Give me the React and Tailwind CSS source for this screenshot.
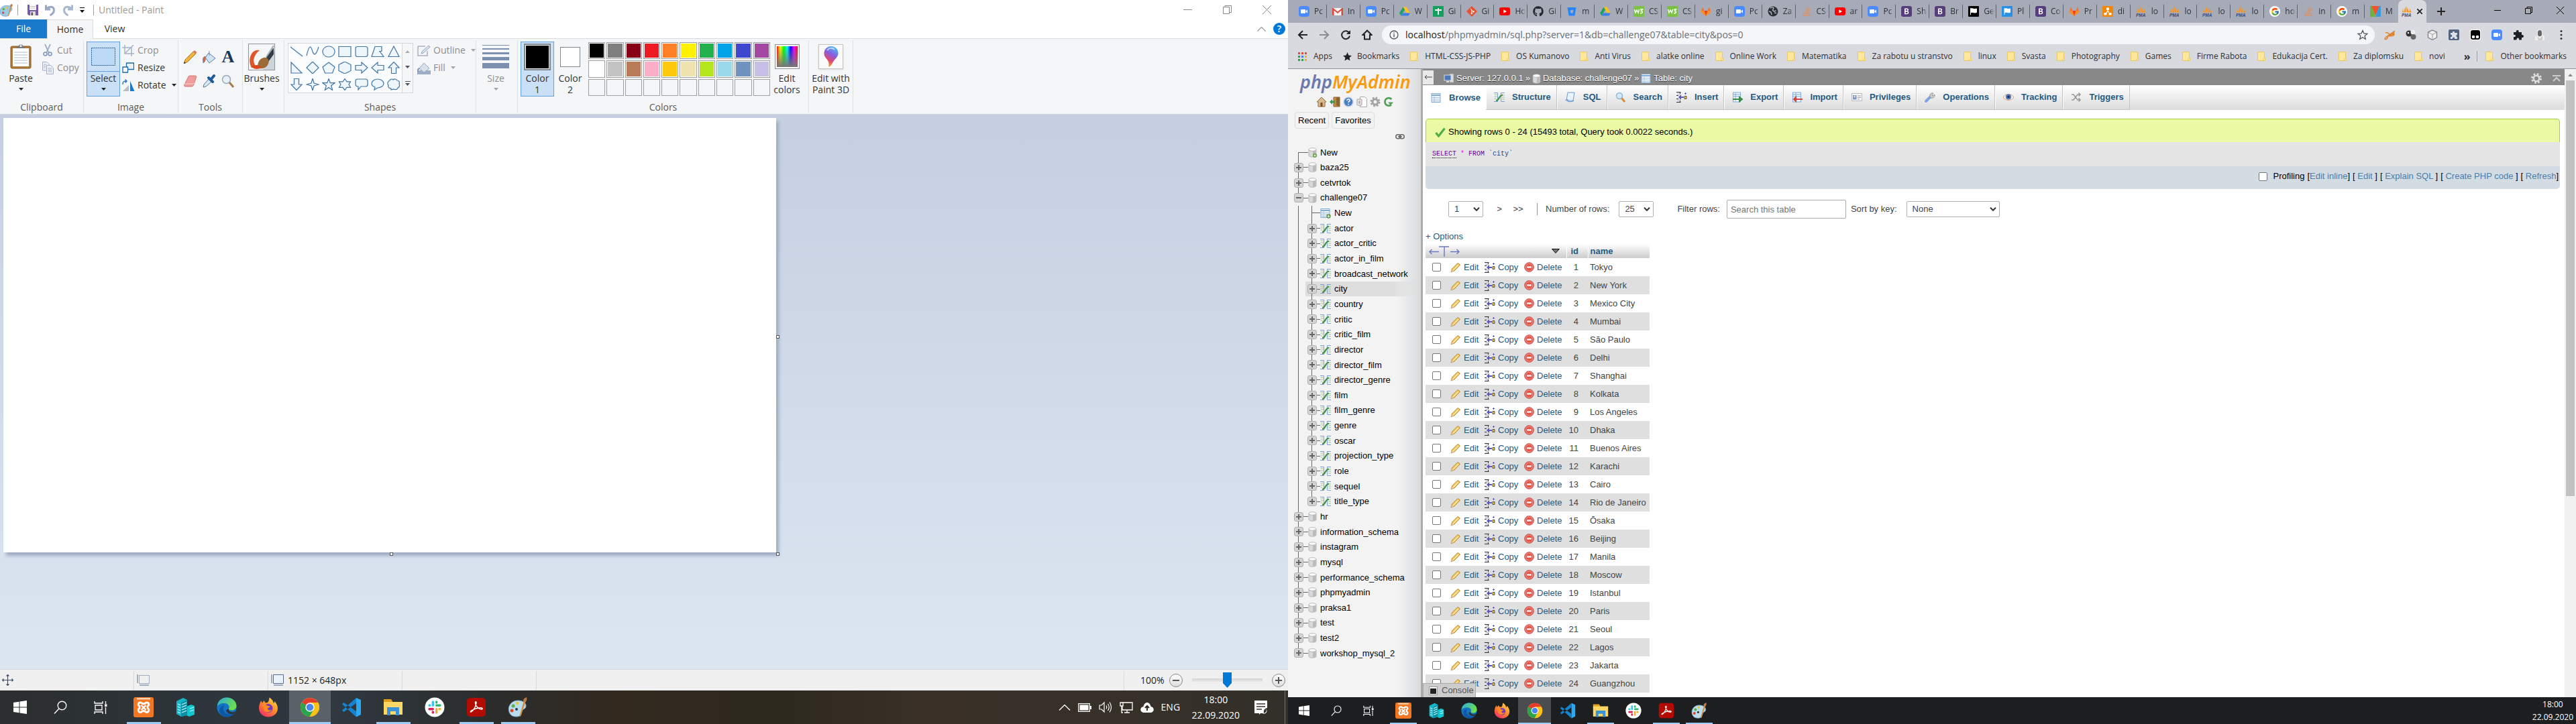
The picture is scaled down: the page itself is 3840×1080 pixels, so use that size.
import React from "react";
import { FcGoogle } from "react-icons/fc";
import { FaGithub, FaStackOverflow } from "react-icons/fa";

const UI = "font-['Open_Sans','Noto_Sans',sans-serif]";
const ARIAL = "font-['Liberation_Sans',Arial,sans-serif]";

function Svg({ s = 16, w, h, vb = "0 0 16 16", className = "", children }) {
  return (
    <svg width={w || s} height={h || s} viewBox={vb} className={"shrink-0 " + className} fill="none" aria-hidden="true">
      {children}
    </svg>
  );
}

/* ---------- shared application icons ---------- */

function ZoomIcon({ s = 16 }) {
  return (
    <Svg s={s}>
      <rect width="16" height="16" rx="4" fill="#4a8cff" />
      <rect x="3" y="5" width="7" height="6" rx="1.2" fill="#fff" />
      <path d="M10.6 7.2 13 5.4v5.2l-2.4-1.8z" fill="#fff" />
    </Svg>
  );
}
function PmaIcon() {
  return (
    <Svg>
      <path d="M6.500 0 3 9.500h3.500zM7.500 1v8.500h4zM2.500 4 .5 9.500h2.200zM12 4l-.3 5.500H15z" fill="#f79420" />
      <text x="0" y="15.500" fontSize="6.500" fontWeight="700" fontStyle="italic" fill="#3d4a7d" fontFamily="Liberation Sans">PMA</text>
    </Svg>
  );
}
function BootstrapIcon() {
  return (
    <Svg>
      <rect width="16" height="16" rx="3" fill="#563d7c" />
      <path fillRule="evenodd" d="M5 3.500h3.600c1.500 0 2.400.8 2.400 2 0 .9-.5 1.600-1.300 1.900 1.100.2 1.700 1 1.700 2.200 0 1.600-1.100 2.600-2.900 2.600H5zm1.700 3.500h1.500c.8 0 1.200-.3 1.200-1s-.4-1-1.200-1H6.700zm0 3.900h1.700c.9 0 1.300-.4 1.300-1.200s-.5-1.200-1.400-1.200H6.700z" fill="#fff" />
    </Svg>
  );
}
const FAV = {
  zoom: <ZoomIcon />,
  gmail: (
    <Svg>
      <path d="M0 3h16v11H0z" fill="#f3f3f3" />
      <path d="M0 14V3h1.500L8 8.500 14.500 3H16v11h-2.500V6.500L8 11 2.500 6.500V14z" fill="#d94a3d" />
    </Svg>
  ),
  drive: (
    <Svg>
      <path d="M5.500 1.500h5L16 10.500h-5z" fill="#fbc11d" />
      <path d="M5.500 1.500 0 10.500l2.500 4L8 5.500z" fill="#1da261" />
      <path d="M5 10.500h11l-2.500 4h-11z" fill="#3f7ee8" />
    </Svg>
  ),
  sheets: (
    <Svg>
      <rect width="16" height="16" rx="1" fill="#12a05c" />
      <path d="M3 5h10v2H9v6H7V7H3zM7 3h2v3H7z" fill="#fff" />
    </Svg>
  ),
  git: (
    <Svg>
      <path d="M8 0l8 8-8 8-8-8z" fill="#e8502f" />
      <path d="M6 4l4 4M7.800 5.800V11" stroke="#fff" strokeWidth="1" />
      <circle cx="7.800" cy="11" r="1.200" fill="#fff" />
      <circle cx="10.500" cy="8.200" r="1.200" fill="#fff" />
    </Svg>
  ),
  yt: (
    <Svg>
      <rect y="2" width="16" height="12" rx="3" fill="#f00" />
      <path d="M6.300 5.300v5.400L11 8z" fill="#fff" />
    </Svg>
  ),
  github: <FaGithub size={16} color="#24292e" />,
  bitbucket: (
    <Svg>
      <path d="M1.500 2h13l-2 12.500h-9z" fill="#2684ff" />
      <path d="M5.800 6h4.600l-.7 4.500H6.500z" fill="#a7abb8" />
    </Svg>
  ),
  w3: (
    <Svg>
      <rect width="16" height="16" fill="#7bc143" />
      <path d="M1.500 5l1.500 5 2-4 2 4 1.500-5M10 5h3.500l-2 2.500c3 0 2.500 4-1.500 3" stroke="#fff" strokeWidth="1.400" />
    </Svg>
  ),
  gitlab: (
    <Svg>
      <path d="M8 15 .5 9 3 1.500 5.500 7h5L13 1.500 15.500 9z" fill="#fc6d26" />
      <path d="M8 15 5.500 7h5z" fill="#e24329" />
      <path d="M8 15 .5 9l.8-2h4.200zM8 15l7.500-6-.8-2h-4.200z" fill="#fca326" opacity=".6" />
    </Svg>
  ),
  globe: (
    <Svg>
      <circle cx="8" cy="8" r="7.500" fill="#2b2f36" />
      <path d="M4 3c2-1 4-1 5 0L7.500 6l2 2 3-1M2 8l3 1 1 4M10 10l3 .5" stroke="#b5b8c1" strokeWidth="1.400" />
    </Svg>
  ),
  so: <FaStackOverflow size={16} color="#dc905f" />,
  boot: <BootstrapIcon />,
  flagk: (
    <Svg>
      <rect width="16" height="16" rx="1" fill="#000" />
      <path d="M3.500 3v10M4 4c3-1 4 1.500 8.500 0v5.500C9 11 7 8.500 4 9.500z" stroke="#fff" fill="#fff" />
    </Svg>
  ),
  flagb: (
    <Svg>
      <rect width="16" height="16" rx="1" fill="#2790e8" />
      <path d="M4 3v10M4.500 4c3-1 4 1.500 8 0v5.500c-3.500 1-5-1-8 0z" stroke="#fff" fill="#fff" />
    </Svg>
  ),
  draw: (
    <Svg>
      <rect width="16" height="16" rx="1" fill="#f08705" />
      <path d="M8 4v3l-3 5m3-5 3 5" stroke="#fff" strokeWidth="1.200" />
      <path d="M6 2.500h4v3.500H6zM2.500 10h4v3.500h-4zM9.500 10h4v3.500h-4z" fill="#fff" />
    </Svg>
  ),
  pma: <PmaIcon />,
  google: (
    <span className="flex size-4 items-center justify-center rounded-full bg-white">
      <FcGoogle size={13} />
    </span>
  ),
  m: (
    <Svg>
      <path d="M0 0h3l5 16H0z" fill="#6cb33e" />
      <path d="M16 0h-3L8 16h8z" fill="#3b9bdc" />
      <path d="M2 0h12L8 14z" fill="#f0532d" />
    </Svg>
  ),
};

const APP = {
  xampp: (s) => (
    <Svg s={s} vb="0 0 30 30">
      <rect width="30" height="30" rx="3" fill="#f37623" />
      <path d="M5 1h20v2.500H5z" fill="#fbd0b0" />
      <path d="M10 8c-3 0-4 4-1 5.500v3C6 18 7 22.500 10 22.500c2 0 3-2 5-2s3 2 5 2c3 0 4-4.500 1-6v-3C24 12 23 8 20 8c-2 0-3 2-5 2s-3-2-5-2z" stroke="#fff" strokeWidth="2.800" />
      <path d="M11.500 12l7 7M18.500 12l-7 7" stroke="#fff" strokeWidth="2.400" />
    </Svg>
  ),
  server: (s) => (
    <Svg s={s} vb="0 0 30 30">
      <path d="M2 6 12 1l6 3v23l-9 2-7-4z" fill="#14b5c8" />
      <path d="M17 14l7-3 5 2v13l-8 3-4-2z" fill="#0fc6d3" />
      <path d="M9 8l9-4v23l-9 2z" fill="#0c8fa3" />
      <path d="M4 10l4 2M4 14l4 2M4 18l4 2M4 22l4 2M10 11l7-3M10 15l7-3M10 19l7-3M10 23l7-3M22 17l6-2M22 21l6-2" stroke="#c9f6fa" strokeWidth="1.300" />
    </Svg>
  ),
  edge: (s) => (
    <Svg s={s} vb="0 0 30 30">
      <defs>
        <linearGradient id="edgeA" x1="0" y1="0" x2="1" y2=".5">
          <stop stopColor="#2aa9e0" />
          <stop offset="1" stopColor="#6ee04c" />
        </linearGradient>
      </defs>
      <circle cx="15" cy="15" r="14.500" fill="#1474c4" />
      <path d="M.8 14C1 6 7 .5 15 .5S29.500 6 29.500 13c0 4-3 6.500-7 6.500-3.500 0-5-1.500-4.500-2.500 2-3-.5-8-6.500-8C6 9 2 11 .8 14z" fill="url(#edgeA)" />
      <path d="M12 12c-4 4-2 11 4 13 4 1.300 8 .5 10.500-1.200C22 31 10 31.500 5 24 2.500 19 5 13 12 12z" fill="#0f57a5" />
      <path d="M18 17c-1 3 2 6 7 5l3-1.500-2 4c-5 2-11 0-12-5z" fill="#293440" />
    </Svg>
  ),
  firefox: (s) => (
    <Svg s={s} vb="0 0 30 30">
      <defs>
        <linearGradient id="ffA" x1=".9" y1="0" x2=".2" y2="1">
          <stop stopColor="#ffe14a" />
          <stop offset=".5" stopColor="#ff8a2a" />
          <stop offset="1" stopColor="#f22a6b" />
        </linearGradient>
      </defs>
      <path d="M1 16C1 11 3 8 4.500 5c0 2 1 3 2 3.500C7 6.500 8 5.500 9 5c0 2 1 3 3 3.500 3-.2 4-3 4.500-8C21 3 22 6 23 9c1-.5 1.300-2 1-3 3 2.500 5 7 5 10.500C29 24 23 29.500 15 29.500S1 24 1 16z" fill="url(#ffA)" />
      <circle cx="15" cy="16.500" r="6.500" fill="#6e38c9" />
      <path d="M6 12c3-2 6-1 8 1l4 .5c-1 2-4 2.500-4 4s3 3 6 1c-1 4-8 5.500-11 1.500C7 17.500 7 14 6 12z" fill="#ff8a1f" />
    </Svg>
  ),
  chrome: (s) => (
    <Svg s={s} vb="0 0 30 30">
      <circle cx="15" cy="15" r="14" fill="#fbc116" />
      <path d="M15 15 2.900 8A14 14 0 0 1 27.100 8H15z" fill="#e33b2e" />
      <path d="M15 15 2.900 8A14 14 0 0 0 14.500 29l6-10.500z" fill="#2aa54c" />
      <path d="M27.100 8H15a7 7 0 0 1 6 10.500L14.500 29A14 14 0 0 0 27.100 8z" fill="#fbc116" />
      <circle cx="15" cy="15" r="6.700" fill="#fff" />
      <circle cx="15" cy="15" r="5.300" fill="#4a86ee" />
    </Svg>
  ),
  vscode: (s) => (
    <Svg s={s} vb="0 0 30 30">
      <path d="M22 1 29 4v22l-7 3.500z" fill="#2aa8f2" />
      <path d="M22 1 1 19.500 3.500 22 22 9zM22 29.500 1 10.500 3.500 8 22 21z" fill="#1583cf" />
    </Svg>
  ),
  explorer: (s) => (
    <Svg s={s} vb="0 0 30 30">
      <path d="M1 3h11l2 3v4H1z" fill="#e0a21c" />
      <path d="M1 7h28v19H1z" fill="#ffd764" />
      <path d="M6 15h18v12h-5v-6h-8v6H6z" fill="#3a93d8" />
    </Svg>
  ),
  slack: (s) => (
    <Svg s={s} vb="0 0 30 30">
      <circle cx="15" cy="15" r="14.500" fill="#fff" />
      <g strokeWidth="3.400" strokeLinecap="round">
        <path d="M12.300 7v5.300M7 12.300h1" stroke="#36c5f0" />
        <path d="M17.700 12.300H23M17.700 7v1" stroke="#2eb67d" />
        <path d="M17.700 17.700V23M22 17.700h1" stroke="#ecb22e" />
        <path d="M12.300 17.700H7M12.300 22v1" stroke="#e01e5a" />
      </g>
    </Svg>
  ),
  acrobat: (s) => (
    <Svg s={s} vb="0 0 30 30">
      <rect x="1" y="1" width="28" height="28" rx="5" fill="#b30b00" />
      <path d="M7 22c3-1 7-7 8-13 .5-3-2-3-1.500 0 .5 4 5 9 9 9 2.500 0 2-2.500-1-2.300-5 .3-10 2-13.500 4.300-2 1.300-2 2.500-1 2z" stroke="#fff" strokeWidth="1.500" />
    </Svg>
  ),
  paint: (s) => (
    <Svg s={s} vb="0 0 30 30">
      <path d="M2 22C-1 13 6 5 15 5c8 0 12 4 12 8 0 5-5 4-6 8s-1 8-8 8S3.500 26 2 22z" fill="#b9dcee" stroke="#7fb0cc" />
      <circle cx="8" cy="13" r="2.500" fill="#5bb13e" />
      <circle cx="14" cy="9" r="2.200" fill="#f1c232" />
      <circle cx="6" cy="20" r="2.500" fill="#d94a2c" />
      <circle cx="13" cy="18" r="2" fill="#2d3c4a" />
      <path d="M24 5l3 .5L19 29l-1.500-1z" fill="#d78b3a" />
      <path d="M23 6c0-4 3-5 5-6 1 4 0 6-2 7z" fill="#b37b4e" />
    </Svg>
  ),
};
const APPS = [
  ["xampp", "XAMPP", "run"],
  ["server", "Server"],
  ["edge", "Edge"],
  ["firefox", "Firefox"],
  ["chrome", "Chrome", "active"],
  ["vscode", "Visual Studio Code"],
  ["explorer", "File Explorer", "run"],
  ["slack", "Slack"],
  ["acrobat", "Acrobat Reader", "run"],
  ["paint", "Paint", "run"],
];

function WinLogo({ s }) {
  return (
    <Svg s={s} vb="0 0 20 20">
      <path d="M0 3l8.500-1.300V9.500H0zM9.500 1.500 20 0v9.500H9.500zM0 10.500h8.500v7.800L0 17zM9.500 10.500H20V20L9.500 18.500z" fill="#fff" />
    </Svg>
  );
}
function SearchGlyph({ s }) {
  return (
    <Svg s={s} vb="0 0 20 20">
      <circle cx="12.500" cy="7.500" r="6.300" stroke="#fff" strokeWidth="1.400" />
      <path d="M8 12 1 19.500" stroke="#fff" strokeWidth="1.400" />
    </Svg>
  );
}
function TaskView({ s }) {
  return (
    <Svg s={s} vb="0 0 20 20">
      <path d="M1 1v3h12V1M2 7h10v7H2zM1 20v-3h12v3M17.500 1v4M17.500 10v10" stroke="#fff" strokeWidth="1.300" />
      <path d="M16 5.500h3.500v3.500H16z" fill="#fff" />
    </Svg>
  );
}

/* ---------- Paint window ---------- */

function Caret({ className = "text-[#222]" }) {
  return (
    <svg width="7" height="4" viewBox="0 0 7 4" className={"shrink-0 " + className} aria-hidden="true">
      <path d="M0 0h7L3.500 4z" fill="currentColor" />
    </svg>
  );
}

function Group({ width, label, children }) {
  return (
    <section className={"flex shrink-0 " + width}>
      <div className="flex min-w-0 flex-1 flex-col pt-1">
        <div className="flex h-[82px] items-start">{children}</div>
        <h2 className="mt-1.5 text-center leading-5 text-[#5a5a5a]">{label}</h2>
      </div>
      <div className="my-0.5 w-px bg-[#dfe1e3]" />
    </section>
  );
}

function BigButton({ className = "", icon, lines, caret, muted, active }) {
  return (
    <button
      type="button"
      className={
        "flex h-[82px] shrink-0 flex-col items-center leading-[17px] " +
        (active ? "bg-[#c9e0f7] outline outline-1 -outline-offset-1 outline-[#62a2e4] " : "") +
        (muted ? "text-[#8d8d8d] " : "text-[#333] ") +
        className
      }
    >
      <span className="mb-px flex h-[45px] items-center justify-center">{icon}</span>
      {lines.map((l) => (
        <span key={l} className="block whitespace-nowrap">{l}</span>
      ))}
      {caret && <Caret className={muted ? "mt-1.5 text-[#a5a5a5]" : "mt-1.5 text-[#222]"} />}
    </button>
  );
}

function SmallButton({ icon, label, muted, caret }) {
  return (
    <button type="button" className={"flex h-[26px] items-center gap-1 " + (muted ? "text-[#8d8d8d]" : "text-[#333]")}>
      <span className="flex w-5 justify-center">{icon}</span>
      {label}
      {caret && <Caret className={muted ? "ml-1 text-[#a5a5a5]" : "ml-1 text-[#222]"} />}
    </button>
  );
}

const SHAPES = [
  "M1 2l18 14",
  "M1 15C6-6 8 3 10 9s5 6 9-7",
  "M10 1a9 8 0 1 0 .01 0z",
  "M1 1.500h18v15H1z",
  "M4 1.500h12q3 0 3 3v9q0 3-3 3H4q-3 0-3-3v-9q0-3 3-3z",
  "M6 1.500h10v7h-3l6 8H1z",
  "M10 1l8 15.500H2z",
  "M2 1l16 16H2z",
  "M10 0l9 9-9 9-9-9z",
  "M10 1l9 7-3.500 9h-11L1 8z",
  "M10 0l9 4.500v9L10 18l-9-4.500v-9z",
  "M1 5.500h9V1l9 8-9 8v-4.500H1z",
  "M19 5.500h-9V1L1 9l9 8v-4.500h9z",
  "M6.500 17.500V9H2l8-8.500L18 9h-4.500v8.500z",
  "M6.500.5V9H2l8 8.500L18 9h-4.500V.5z",
  "M10 0l2 7 7 2-7 2-2 7-2-7-7-2 7-2z",
  "M10 .5l2.300 6.200H19l-5.300 4 2 6.800L10 13.500 4.300 17.500l2-6.800L1 6.700h6.700z",
  "M10 .5l3 4.300h5.500L16 9l2.500 4.300H13L10 17.500l-3-4.200H1.500L4 9 1.500 4.800H7z",
  "M4 1h12q3 0 3 3v5q0 3-3 3H9l-4 5v-5q-4 0-4-3V4q0-3 3-3z",
  "M10 1c5 0 9 3 9 6.500S15 14 10 14l-5 3 1-4C3 12 1 10 1 7.500 1 4 5 1 10 1z",
  "M4 3c1-3 4-2 5-1 2-2 5-1 6 1 3 0 4 3 3 5 1 2 1 5-2 6-1 3-4 3-6 2l-4 1 0-2C3 15 1 13 2 10 0 8 1 4 4 3z",
];
const PALETTE = [
  "#000000", "#7f7f7f", "#880015", "#ed1c24", "#ff7f27", "#fff200", "#22b14c", "#00a2e8", "#3f48cc", "#a349a4",
  "#ffffff", "#c3c3c3", "#b97a57", "#ffaec9", "#ffc90e", "#efe4b0", "#b5e61d", "#99d9ea", "#7092be", "#c8bfe7",
];

function Ribbon() {
  return (
    <div className="flex h-[113px] border-b border-[#d0d3d8] bg-[#f5f6f7]">
      <Group width="w-[125px]" label="Clipboard">
        <BigButton
          className="ml-[7px] w-12"
          lines={["Paste"]}
          caret
          icon={
            <Svg w={32} h={37} vb="0 0 32 37">
              <rect x="1" y="3" width="30" height="33" rx="2" fill="#b07a3a" stroke="#8a5a22" />
              <rect x="4" y="6" width="24" height="27" fill="#fff" />
              <path d="M6 12h20M6 16h20M6 20h20M6 24h20M6 28h20" stroke="#a9bcd4" />
              <path d="M9 6c0-3 4-2 4-4s6-2 6 0 4 1 4 4z" fill="#777" />
              <circle cx="16" cy="2.500" r="1.500" fill="#fff" />
            </Svg>
          }
        />
        <div className="ml-1.5 flex flex-col">
          <SmallButton muted label="Cut" icon={
            <Svg w={14} h={18} vb="0 0 14 18">
              <path d="M3 0l5.500 12M11 0 5.500 12" stroke="#9aa9c4" strokeWidth="1.800" />
              <circle cx="3.500" cy="14.500" r="2.500" stroke="#8294b8" strokeWidth="1.500" />
              <circle cx="10.500" cy="14.500" r="2.500" stroke="#8294b8" strokeWidth="1.500" />
            </Svg>
          } />
          <SmallButton muted label="Copy" icon={
            <Svg w={17} h={19} vb="0 0 17 19">
              <path d="M.5.5H7l3 3V13H.5z" fill="#eef2f8" stroke="#9fb0cc" />
              <path d="M6.500 5.500h6l4 4v9h-10z" fill="#eef2f8" stroke="#9fb0cc" />
              <path d="M2 4h4M2 6.500h3M2 9h3M8.500 10h6M8.500 12.500h6M8.500 15h6" stroke="#9fb0cc" />
            </Svg>
          } />
        </div>
      </Group>
      <Group width="w-[141px]" label="Image">
        <div className="ml-1 flex w-[50px] shrink-0 flex-col">
          <BigButton
            active
            className="w-[50px]"
            lines={["Select"]}
            caret
            icon={
              <span className="flex h-[45px] w-[50px] items-center justify-center border-b border-[#62a2e4]">
                <Svg w={36} h={27} vb="0 0 36 27">
                  <rect x=".5" y=".5" width="35" height="26" fill="#bcd9f5" stroke="#2a5a94" strokeDasharray="2 1" />
                </Svg>
              </span>
            }
          />
        </div>
        <div className="ml-0.5 flex flex-col">
          <SmallButton muted label="Crop" icon={
            <Svg w={18} h={17} vb="0 0 18 17">
              <path d="M4 0v13h14M0 4h14v13M4 13 17 0" stroke="#a3b2c9" strokeWidth="1.500" />
            </Svg>
          } />
          <SmallButton label="Resize" icon={
            <Svg w={18} h={16} vb="0 0 18 16">
              <path d="M6.500 1h11v9.500h-11z" fill="#e8f2fb" stroke="#1d6aa8" strokeWidth="1.300" />
              <path d="M1 7h7.500v8H1z" fill="#fff" stroke="#1d6aa8" strokeWidth="1.300" />
            </Svg>
          } />
          <SmallButton label="Rotate" caret icon={
            <Svg w={19} h={19} vb="0 0 19 19">
              <path d="M1 18h9V9z" fill="#b9bcc0" />
              <path d="M12 3v15h6.500z" fill="#1c78c8" />
              <path d="M1 8c0-4 1-5 5-5M4.500.5 7 3 4.500 5.500" stroke="#2a7ac4" strokeWidth="1.500" />
            </Svg>
          } />
        </div>
      </Group>
      <Group width="w-[96px]" label="Tools">
        <div className="mt-[5px] ml-1 grid w-[84px] grid-cols-3">
          {[
            <Svg key="p" s={20} vb="0 0 20 20"><path d="M0 20l2-6L14 2l4 3L6 17z" fill="#f2b53a" stroke="#8a6220" strokeWidth=".8" /><path d="M14 2l2-2 3.500 3L18 5z" fill="#e27468" /><path d="M0 20l1-3 2 2z" fill="#333" /></Svg>,
            <Svg key="f" s={20} vb="0 0 20 20"><path d="M9 4l10 8-9 7-6-8z" fill="#cfe3f5" stroke="#5f7fa5" /><path d="M10 8V1M4 9C0 10 0 14 1 19c3-1 3-6 4-8z" stroke="#7d8fa9" fill="#e8622c" /></Svg>,
            <span key="a" className="font-['Liberation_Serif',serif] text-[26px] leading-5 font-bold text-[#1b355c]">A</span>,
            <Svg key="e" s={20} vb="0 0 20 20"><path d="M7 3q1-1 2-1h8q2 0 1.500 2L15 15q-1 3-3 3H2Q0 18 1 15z" fill="#ee9d9b" stroke="#d27673" /><path d="M1 14l13 0 2-1" stroke="#fbd0cf" /></Svg>,
            <Svg key="k" s={20} vb="0 0 20 20"><path d="M1 19l1-4 7-8 4 4-8 7z" fill="#dce9f4" stroke="#52749a" /><path d="M9 5l6 6M12 8l5-6" stroke="#1e5b99" strokeWidth="4" strokeLinecap="round" /></Svg>,
            <Svg key="m" s={20} vb="0 0 20 20"><circle cx="7.500" cy="7.500" r="6" fill="#e6f1fa" stroke="#9aa7b5" strokeWidth="1.500" /><path d="M12 12l6 7" stroke="#a97a47" strokeWidth="3" /></Svg>,
          ].map((icon, i) => (
            <button key={i} type="button" aria-label={["Pencil", "Fill with color", "Text", "Eraser", "Color picker", "Magnifier"][i]} className="flex h-9 items-center justify-center">{icon}</button>
          ))}
        </div>
      </Group>
      <Group width="w-[62px]" label="">
        <BigButton
          className="w-[56px]"
          lines={["Brushes"]}
          caret
          icon={
            <Svg s={40} vb="0 0 40 40">
              <rect x=".5" y=".5" width="39" height="39" fill="#f4f6f8" stroke="#8d9296" />
              <path d="M39 10v29H22z" fill="#ccd5dc" />
              <path d="M17 10c-12-3-19 14-12 26l9 0c-9-6-7-18 3-26z" fill="#e0562a" />
              <path d="M26 22 38 6v10l-8 11z" fill="#333c46" />
              <path d="M14 37c0-5 0-13 9-16 6-1 9 4 7 9-3 7-9 8-16 7z" fill="#9c6a35" />
              <path d="M38 3 27 20" stroke="#9fa8b0" strokeWidth="2" />
              <path d="M5 35c5-4 10-4 14 0-3 4-9 4-14 0z" fill="#d9481f" />
            </Svg>
          }
        />
      </Group>
      <Group width="w-[286px]" label="Shapes">
        <div className="mt-0.5 ml-[5px] flex h-[75px] border border-[#d4d8dc] bg-[#fbfcfe]">
          <div className="grid w-[169px] grid-cols-7">
            {SHAPES.map((d, i) => (
              <button key={i} type="button" aria-label={"Shape " + (i + 1)} className="flex h-6 items-center justify-center">
                <svg width="20" height="18" viewBox="0 0 20 18" fill="#eef5fb" stroke="#3e76a8" strokeWidth="1.200" aria-hidden="true"><path d={d} fill={i < 2 ? "none" : undefined} /></svg>
              </button>
            ))}
          </div>
          <div className="flex w-4 flex-col items-center justify-around border-l border-[#d4d8dc] bg-[#f5f6f7]">
            <Caret className="rotate-180 text-[#a9acb0]" />
            <Caret className="text-[#4b5560]" />
            <span className="flex flex-col items-center gap-0.5"><span className="h-px w-2 bg-[#4b5560]" /><Caret className="text-[#4b5560]" /></span>
          </div>
        </div>
        <div className="ml-1.5 flex flex-col">
          <SmallButton muted caret label="Outline" icon={
            <Svg w={20} h={17} vb="0 0 20 17"><path d="M1 2h11M1 2v14h14V9" stroke="#a9b1bd" strokeWidth="1.500" /><path d="M6 13l1-3L17 1l2 2L9 12z" fill="#dfe6f0" stroke="#8fa0b8" /></Svg>
          } />
          <SmallButton muted caret label="Fill" icon={
            <Svg w={20} h={19} vb="0 0 20 19"><path d="M0 13h20v6H0z" fill="#9dadc6" /><path d="M10 2l8 8-8 6-7-6z" fill="#d8e0ec" stroke="#95a5be" /><path d="M3 10c-2 1-3 3-2 6" stroke="#8799b8" strokeWidth="2" /></Svg>
          } />
        </div>
      </Group>
      <Group width="w-[62px]" label="">
        <BigButton
          muted
          className="w-[58px]"
          lines={["Size"]}
          caret
          icon={
            <span className="flex w-10 flex-col gap-1">
              <span className="h-px bg-[#7d8fae]" />
              <span className="h-0.5 bg-[#7d8fae]" />
              <span className="h-[3px] bg-[#7d8fae]" />
              <span className="h-[5px] bg-[#7d8fae]" />
              <span className="h-2 bg-[#7d8fae]" />
            </span>
          }
        />
      </Group>
      <Group width="w-[434px]" label="Colors">
        <BigButton active className="ml-1 w-[50px]" lines={["Color", "1"]} icon={<span className="size-10 border-2 border-[#7e8790] bg-black ring-1 ring-white ring-inset" />} />
        <BigButton className="w-12" lines={["Color", "2"]} icon={<span className="size-[30px] border border-[#7e8790] bg-white" />} />
        <div className="mt-px ml-[3px] grid h-20 w-[271px] grid-cols-10 gap-0.5">
          {Array.from({ length: 30 }, (_, i) => (
            <button
              key={i}
              type="button"
              aria-label={"Swatch " + (i + 1)}
              className={"border border-[#a0a0a0] p-px " + (i < 20 ? "bg-white" : "bg-[#f5f6f7]")}
            >
              <span className="block size-full" style={{ background: PALETTE[i] }} />
            </button>
          ))}
        </div>
        <BigButton
          className="w-[50px]"
          lines={["Edit", "colors"]}
          icon={
            <span className="size-[37px] border border-[#8f8f8f] bg-white p-0.5">
              <span className="block size-full bg-[linear-gradient(to_bottom,transparent,#777),linear-gradient(to_right,red,yellow,lime,cyan,blue,magenta,red)]" />
            </span>
          }
        />
      </Group>
      <Group width="w-[66px]" label="">
        <BigButton
          className="w-full"
          lines={["Edit with", "Paint 3D"]}
          icon={
            <span className="flex size-[37px] items-center justify-center border border-[#c4c4c4] bg-[#fafafa] shadow-sm">
              <Svg w={22} h={31} vb="0 0 22 31">
                <defs>
                  <linearGradient id="p3d" x1=".7" y1="0" x2=".3" y2="1"><stop stopColor="#45c0f0" /><stop offset=".4" stopColor="#8a5ae0" /><stop offset=".7" stopColor="#e2466f" /><stop offset="1" stopColor="#f5b21d" /></linearGradient>
                </defs>
                <path d="M11 0C5 0 .5 4.500.5 10.500c0 5 3 7 5 10S8 27 7 31c3-1 5-4 7-8 2-3.500 7.500-7 7.500-12.500C21.500 4.500 17 0 11 0z" fill="url(#p3d)" />
                <path d="M5 6c3-4 8-4 11-1" stroke="#c6d4ff" strokeWidth="2" />
              </Svg>
            </span>
          }
        />
      </Group>
    </div>
  );
}

function PaintWindow() {
  return (
    <div className={"flex h-full min-w-0 flex-1 basis-0 flex-col text-sm " + UI}>
      <div className="flex h-[29px] items-center bg-white">
        <Svg s={20} vb="0 0 30 30"><path d="M0 20C0 10 6 5 15 5c8 0 12 4 12 8 0 5-5 4-6 8s-1 8-8 8S0 26 0 20z" fill="#9cc9e6" stroke="#5f9cc2" /><circle cx="8" cy="13" r="2.500" fill="#5bb13e" /><circle cx="15" cy="10" r="2.500" fill="#f1c232" /><circle cx="7" cy="21" r="2.500" fill="#d94a2c" /><path d="M23 8l3 .5L19 29l-1.500-1z" fill="#d78b3a" /><path d="M22 7c0-4 3-5 5-6 2 3 1 6-1 7z" fill="#c08048" /></Svg>
        <span className="ml-1.5 h-4 w-px bg-[#a0a0a0]" />
        <button type="button" aria-label="Save" className="ml-3.5"><Svg><path d="M0 0h16v16H2l-2-2z" fill="#7a56a8" /><path d="M3 0h10v8H3z" fill="#fff" /><path d="M4 2.500h8M4 5h8" stroke="#bbb" /><path d="M4 10h8v6H4z" fill="#ddd" /><path d="M5.500 11.500h2.500V16H5.500z" fill="#555" /></Svg></button>
        <button type="button" aria-label="Undo" className="ml-[9px]"><Svg s={18} vb="0 0 18 18"><path d="M2.500 1.500v6.500h6.500M3 7.500C7 3 14 3 14.500 9c0 3-2.500 6-6 8" stroke="#98a8c5" strokeWidth="3" /></Svg></button>
        <button type="button" aria-label="Redo" className="ml-2"><Svg s={18} vb="0 0 18 18"><path d="M15.500 1.500v6.500H9M15 7.500C11 3 4 3 3.500 9c0 3 2.500 6 6 8" stroke="#a9b7cf" strokeWidth="3" /></Svg></button>
        <span className="ml-[9px] flex flex-col items-center gap-[3px]"><span className="h-px w-[7px] bg-black" /><Caret className="text-black" /></span>
        <span className="ml-[13px] h-4 w-px bg-[#a0a0a0]" />
        <h1 className="ml-[7px] text-[#999]">Untitled - Paint</h1>
        <div className="ml-auto flex gap-[46px] pr-[25px] text-[#888]">
          <button type="button" aria-label="Minimize"><Svg s={13} vb="0 0 13 13"><path d="M0 6.500h13" stroke="currentColor" /></Svg></button>
          <button type="button" aria-label="Restore"><Svg s={13} vb="0 0 13 13"><path d="M.5 2.500h9v10h-9zM3 2.500v-2h9.500v10H10" stroke="currentColor" /></Svg></button>
          <button type="button" aria-label="Close"><Svg s={13} vb="0 0 13 13"><path d="M0 0l13 13M13 0 0 13" stroke="currentColor" /></Svg></button>
        </div>
      </div>
      <div className="flex h-[29px] border-b border-[#dadbdc] bg-white">
        <button type="button" className="w-[70px] bg-[#1979ca] text-white">File</button>
        <button type="button" className="-mb-px w-[69px] border border-b-0 border-[#dadbdc] bg-[#f5f6f7] text-[#333]">Home</button>
        <button type="button" className="w-16 text-[#333]">View</button>
        <div className="ml-auto flex items-center gap-[11px] pr-1">
          <Svg w={13} h={7} vb="0 0 13 7"><path d="M.5 6.500l6-6 6 6" stroke="#999" strokeWidth="1.200" /></Svg>
          <button type="button" aria-label="Help" className="size-[18px] rounded-full bg-[#0078d7] text-sm leading-[18px] font-semibold text-white">?</button>
        </div>
      </div>
      <Ribbon />
      <div className="min-h-0 flex-1 bg-linear-to-b from-[#c6cfe0] to-[#dce6f2] pt-[5px] pl-[5px]">
        <div className="relative h-[648px] w-[1152px] bg-white shadow-[4px_5px_5px_#9fabc2]">
          <span className="absolute top-1/2 left-full size-[5px] border border-[#555] bg-white" />
          <span className="absolute top-full left-1/2 size-[5px] border border-[#555] bg-white" />
          <span className="absolute top-full left-full size-[5px] border border-[#555] bg-white" />
        </div>
      </div>
      <div className="flex h-8 items-center border-t border-[#d5d8dc] bg-[#f0f0f0] text-[#222]">
        <span className="flex h-7 w-[200px] items-center border-r border-[#dadada] pl-[3px]">
          <Svg s={17} vb="0 0 17 17"><path d="M8.500 0v17M0 8.500h17M6.500 2.500l2-2 2 2M6.500 14.500l2 2 2-2M2.500 6.500l-2 2 2 2M14.500 6.500l2 2-2 2" stroke="#3d4f6d" strokeWidth="1.200" /></Svg>
        </span>
        <span className="flex h-7 w-[200px] items-center border-r border-[#dadada] pl-1">
          <Svg w={19} h={17} vb="0 0 19 17"><path d="M3.500 1.500h15v12h-15z" stroke="#55698c" strokeDasharray="1 1" /><path d="M1 0v13M4 16h14" stroke="#55698c" /></Svg>
        </span>
        <span className="flex h-7 w-[200px] items-center gap-1.5 border-r border-[#dadada] pl-1">
          <Svg w={19} h={17} vb="0 0 19 17"><path d="M3.500.5h15v13h-15z" fill="#eaf3fa" stroke="#55698c" /><path d="M1 0v13M4 16h14" stroke="#55698c" /></Svg>
          1152 × 648px
        </span>
        <span className="h-7 w-[200px] border-r border-[#dadada]" />
        <div className="ml-auto flex h-7 items-center border-l border-[#dadada] pr-1 pl-6">
          <span className="w-9">100%</span>
          <button type="button" aria-label="Zoom out" className="ml-[7px] flex size-5 items-center justify-center rounded-full border border-[#888] bg-linear-to-b from-white to-[#ddd]"><Svg s={10} vb="0 0 10 10"><path d="M0 5h10" stroke="#555" strokeWidth="2" /></Svg></button>
          <input
            type="range"
            aria-label="Zoom"
            defaultValue="50"
            className="mx-3.5 h-6 w-[105px] appearance-none bg-[linear-gradient(#d4d4d4,#e7e7e7)] bg-[length:100%_5px] bg-center bg-no-repeat [&::-webkit-slider-thumb]:h-[23px] [&::-webkit-slider-thumb]:w-[13px] [&::-webkit-slider-thumb]:appearance-none [&::-webkit-slider-thumb]:bg-[#0078d7] [&::-webkit-slider-thumb]:[clip-path:polygon(0_0,100%_0,100%_70%,50%_100%,0_70%)]"
          />
          <button type="button" aria-label="Zoom in" className="flex size-5 items-center justify-center rounded-full border border-[#888] bg-linear-to-b from-white to-[#ddd]"><Svg s={10} vb="0 0 10 10"><path d="M0 5h10M5 0v10" stroke="#555" strokeWidth="2" /></Svg></button>
        </div>
      </div>
      <nav aria-label="Main taskbar" className="flex h-[50px] items-stretch bg-[linear-gradient(90deg,#2b2e2e,#2d3439_14%,#303840_26%,#2b2d2c_38%,#33291f_48%,#2d291e_60%,#3a3028_72%,#33302a)] text-white">
        {[<WinLogo key="w" s={20} />, <SearchGlyph key="s" s={20} />, <TaskView key="t" s={20} />].map((icon, i) => (
          <button key={i} type="button" aria-label={["Start", "Search", "Task view"][i]} className="flex w-[60px] items-center justify-center">{icon}</button>
        ))}
        <div className="ml-[3px] flex">
          {APPS.map(([id, name, state]) => (
            <button key={id} type="button" aria-label={name} className={"flex w-[62px] flex-col items-center justify-between " + (state === "active" ? "bg-[#5a6169]" : "")}>
              <span className="flex h-[47px] items-center pt-[3px]">{APP[id](30)}</span>
              <span className={"h-[3px] " + (state === "active" ? "w-full bg-[#9ccbf5]" : state ? "w-[51px] bg-[#9ccbf5]" : "w-0")} />
            </button>
          ))}
        </div>
        <div className="ml-auto flex items-center gap-[11px]">
          <Svg w={18} h={9} vb="0 0 18 9"><path d="M1 8.500l8-8 8 8" stroke="#fff" strokeWidth="1.300" /></Svg>
          <Svg w={20} h={13} vb="0 0 20 13"><path d="M.7.7h16.600v11.600H.7z" stroke="#fff" strokeWidth="1.200" /><path d="M2.500 2.500h13v8h-13zM18 4h2v5h-2z" fill="#fff" /></Svg>
          <Svg w={20} h={18} vb="0 0 20 18"><path d="M1 6h3l4-4v14l-4-4H1zM11 6.500q1.500 2.500 0 5M13.500 4q3.500 5 0 10M16 1.500q5 7.500 0 15" stroke="#fff" strokeWidth="1.200" /></Svg>
          <Svg w={20} h={17} vb="0 0 20 17"><path d="M5 1h14v11H4V7M11 12v4M7 16h8M1 1h4v5H1zM3 6v10h2" stroke="#fff" strokeWidth="1.300" /></Svg>
          <Svg w={20} h={15} vb="0 0 20 15"><path d="M5 15a4.500 4.500 0 0 1-.5-9C5 2 8 0 10 0s5 2 5.500 6a4.500 4.500 0 0 1-.5 9z" fill="#fff" /><path d="M10 12V5M7 8l3-3 3 3" stroke="#2d2a22" strokeWidth="2" /></Svg>
          <span className="w-[31px]">ENG</span>
          <time className="ml-1 flex flex-col gap-[3px] text-center leading-5"><span>18:00</span><span>22.09.2020</span></time>
          <button type="button" aria-label="Notifications" className="ml-2.5"><Svg s={21} vb="0 0 21 21"><path d="M1 0h19v11a6 6 0 0 0-5 8l-2 0-3 0-2 2v-2H1z" fill="#fff" /><path d="M4 5h13M4 9h13M4 13h8" stroke="#39322a" strokeWidth="1.500" /><path d="M16 11c4 2 4 8-3 8 5 3 10-4 3-8z" fill="#fff" /></Svg></button>
          <span className="mr-1 ml-3.5 h-[50px] w-px bg-[#777]" />
        </div>
      </nav>
    </div>
  );
}

/* ---------- browser chrome ---------- */

const TABS = [
  ["zoom", "Pc"], ["gmail", "In"], ["zoom", "Pc"], ["drive", "W"], ["sheets", "Gi"], ["git", "Gi"], ["yt", "Ho"], ["github", "Gi"],
  ["bitbucket", "m"], ["drive", "W"], ["w3", "CS"], ["w3", "CS"], ["gitlab", "gi"], ["zoom", "Pc"], ["globe", "Za"], ["so", "CS"],
  ["yt", "ar"], ["zoom", "Pc"], ["boot", "Sh"], ["boot", "Br"], ["flagk", "Ge"], ["flagb", "Pl"], ["boot", "Co"], ["gitlab", "Pr"],
  ["draw", "di"], ["pma", "lo"], ["pma", "lo"], ["pma", "lo"], ["pma", "lo"], ["google", "ho"], ["so", "in"], ["google", "m"], ["m", "M"],
];
const BOOKMARKS = [
  "HTML-CSS-JS-PHP", "OS Kumanovo", "Anti Virus", "alatke online", "Online Work", "Matematika", "Za rabotu u stranstvo", "linux",
  "Svasta", "Photography", "Games", "Firme Rabota", "Edukacija Cert.", "Za diplomsku", "novi",
];

function Folder() {
  return (
    <Svg w={12} h={14} vb="0 0 12 14">
      <path d="M.5.5h10v9l1 0v4H.5z" fill="#ffe79c" stroke="#ebc75f" />
      <path d="M9 10v3.500" stroke="#ebc75f" />
    </Svg>
  );
}

function BrowserChrome() {
  return (
    <header className={"border-b border-[#8f939b] bg-[#d8dadf] text-xs text-[#2d3036] " + UI}>
      <div className="flex h-[34px] bg-[#a7abb8] pl-2">
        <div className="flex w-[1689px] min-w-0">
          {TABS.map(([icon, text], i) => (
            <button key={i} type="button" className="flex min-w-0 flex-1 items-center pl-2">
              <span className="flex size-4 shrink-0 items-center">{FAV[icon]}</span>
              <span className="ml-[7px] w-[17px] shrink-0 text-left whitespace-nowrap [mask-image:linear-gradient(90deg,#000_55%,transparent_95%)]">{text}</span>
              {i < 32 && <span className="ml-auto h-5 w-px shrink-0 bg-[#5e626c]" />}
            </button>
          ))}
          <div className="flex flex-1 items-center justify-center gap-[7px] rounded-t-lg bg-[#d8dadf]">
            <PmaIcon />
            <button type="button" aria-label="Close tab"><Svg s={8} vb="0 0 8 8"><path d="M0 0l8 8M8 0 0 8" stroke="#222" strokeWidth="1.800" /></Svg></button>
          </div>
        </div>
        <button type="button" aria-label="New tab" className="ml-4"><Svg s={12} vb="0 0 12 12"><path d="M6 0v12M0 6h12" stroke="#222" strokeWidth="2" /></Svg></button>
        <div className="ml-auto flex items-center gap-9 pr-[18px] pb-1">
          <button type="button" aria-label="Minimize"><Svg s={10} vb="0 0 10 10"><path d="M0 5.500h10" stroke="#000" /></Svg></button>
          <button type="button" aria-label="Restore"><Svg s={11} vb="0 0 11 11"><path d="M.5 2.500h8v8h-8zM3 2.500v-2h7.500v8h-2" stroke="#000" /></Svg></button>
          <button type="button" aria-label="Close"><Svg s={11} vb="0 0 11 11"><path d="M0 0l11 11M11 0 0 11" stroke="#000" /></Svg></button>
        </div>
      </div>
      <div className="flex h-[35px] items-center pl-[14px]">
        <div className="flex gap-4 text-[#1f2124]">
          <button type="button" aria-label="Back"><Svg><path d="M15 8H2M8 2 2 8l6 6" stroke="currentColor" strokeWidth="2" /></Svg></button>
          <button type="button" aria-label="Forward"><Svg><path d="M1 8h13M8 2l6 6-6 6" stroke="#8b8d93" strokeWidth="2" /></Svg></button>
          <button type="button" aria-label="Reload"><Svg><path d="M13.500 5.500A6 6 0 1 0 14 9.500" stroke="currentColor" strokeWidth="2" /><path d="M15 1v6H9z" fill="currentColor" /></Svg></button>
          <button type="button" aria-label="Home page"><Svg><path d="M8 1.500 1.500 8H4v6.500h8V8h2.500z" stroke="currentColor" strokeWidth="2" /></Svg></button>
        </div>
        <div className="ml-3.5 flex h-7 min-w-0 flex-1 items-center rounded-full bg-[#f5f6f9] pr-2.5 pl-[11px]">
          <Svg s={14} vb="0 0 14 14"><circle cx="7" cy="7" r="6" stroke="#50545b" strokeWidth="1.300" /><path d="M7 6v4.500M7 3.500V5" stroke="#50545b" strokeWidth="1.400" /></Svg>
          <a href="#page" className="ml-2.5 text-sm text-[#6a6e74]"><span className="text-[#202124]">localhost</span>/phpmyadmin/sql.php?server=1&amp;db=challenge07&amp;table=city&amp;pos=0</a>
          <button type="button" aria-label="Bookmark this page" className="ml-auto"><Svg><path d="M8 1.500l2 4.500 4.800.4-3.700 3.200 1.200 4.800L8 11.800l-4.300 2.600 1.200-4.800L1.200 6.400 6 6z" stroke="#50545b" strokeWidth="1.300" /></Svg></button>
        </div>
        <div className="mr-3.5 ml-3.5 flex items-center gap-4">
          <Svg><path d="M1 14c0-3 3-3 5-5l9-6-1 3-8 4c-1 3-3 6-5 4zM2 5c3-2 5 2 7 3l6-1-1 2-6 1" stroke="#e0812c" strokeWidth="1.600" /></Svg>
          <Svg><circle cx="5" cy="6" r="4.500" fill="#333" /><circle cx="11" cy="4" r="3.500" fill="#eee" /><circle cx="11.500" cy="11" r="4" fill="#666" /><circle cx="4" cy="5" r="1.200" fill="#fff" /></Svg>
          <Svg><path d="M8 1l6.500 3v8L8 15.500 1.500 12V4z" fill="#f0f0f0" stroke="#777" strokeWidth="1.200" /><path d="M1.500 4 8 7.500 14.500 4M8 7.500v8" stroke="#999" /></Svg>
          <Svg><rect width="16" height="16" rx="2" fill="#53627d" /><path d="M3 5h3c-1-3 4-3 3 0h4v3c-2-1-2 4 0 3v3H9c1-3-4-3-3 0H3v-3c3 1 3-4 0-3z" fill="#dce2ec" /></Svg>
          <Svg><rect width="16" height="16" rx="3" fill="#fff" /><rect x="1" y="1" width="14" height="14" rx="3" fill="#000" /><circle cx="5" cy="11" r="2.300" fill="#fff" /><circle cx="11" cy="11" r="2.300" fill="#fff" /></Svg>
          <ZoomIcon />
          <Svg><path d="M1 4h4c-1.500-4 5-4 3.500 0H13v4c4-1 4 5 0 4v3.500H9c1-4-4-4-3.500 0H1V11c4 1 4-4 0-3z" fill="#1d1f23" /></Svg>
          <Svg><path d="M4 3c0-4 8-4 8 1v4l3 2v6H1v-5l3-2z" fill="#eee" /><path d="M5 4c0-4 6-4 6 0v4c-1 3-5 3-6 0z" fill="#666" /><path d="M4 9l4 5 4-5 0 7H6z" fill="#ccc" /></Svg>
          <Svg><circle cx="8" cy="2.500" r="1.500" fill="#333" /><circle cx="8" cy="8" r="1.500" fill="#333" /><circle cx="8" cy="13.500" r="1.500" fill="#333" /></Svg>
        </div>
      </div>
      <nav aria-label="Bookmarks" className="flex h-[33px] items-center gap-4 pb-[3px] pl-[15px] whitespace-nowrap">
        <a href="#apps" className="flex items-center gap-2.5">
          <Svg s={13} vb="0 0 13 13">
            <path d="M0 0h3v3H0zM5 0h3v3H5zM10 0h3v3h-3z" fill="#df4a3e" />
            <path d="M0 5h3v3H0z" fill="#2aa24f" /><path d="M5 5h3v3H5z" fill="#3f80ea" /><path d="M10 5h3v3h-3z" fill="#eeb31c" />
            <path d="M0 10h3v3H0zM5 10h3v3H5z" fill="#2aa24f" /><path d="M10 10h3v3h-3z" fill="#eeb31c" />
          </Svg>
          Apps
        </a>
        <a href="#bookmarks" className="flex items-center gap-2">
          <Svg s={13} vb="0 0 16 16"><path d="M8 0l2.400 5.500 5.600.5-4.200 3.800 1.200 5.700L8 12.500l-5 3 1.200-5.700L0 6l5.600-.5z" fill="#1f2124" /></Svg>
          Bookmarks
        </a>
        {BOOKMARKS.map((b) => (
          <a key={b} href={"#" + b} className="flex items-center gap-2.5"><Folder />{b}</a>
        ))}
        <div className="ml-auto flex items-center pr-3.5">
          <span className="text-base leading-4 font-bold">»</span>
          <span className="mr-3 ml-2.5 h-4 w-px bg-[#9a9da5]" />
          <a href="#other" className="flex items-center gap-2.5"><Folder />Other bookmarks</a>
        </div>
      </nav>
    </header>
  );
}

/* ---------- phpMyAdmin ---------- */

const TABLES = [
  "actor", "actor_critic", "actor_in_film", "broadcast_network", "city", "country", "critic", "critic_film", "director", "director_film",
  "director_genre", "film", "film_genre", "genre", "oscar", "projection_type", "role", "sequel", "title_type",
];
const DBS = ["hr", "information_schema", "instagram", "mysql", "performance_schema", "phpmyadmin", "praksa1", "test", "test2", "workshop_mysql_2"];

function DbIcon({ add }) {
  return (
    <Svg w={13} h={15} vb="0 0 13 15">
      <path d="M1 3v9c0 3 11 3 11 0V3z" fill="#d9d9d9" stroke="#aaa" strokeWidth=".8" />
      <path d="M7 4.500h4.500V13L7 14z" fill="#bbb" />
      <ellipse cx="6.500" cy="3" rx="5.500" ry="2.300" fill="#fafafa" stroke="#aaa" strokeWidth=".8" />
      {add && <g><circle cx="10" cy="12" r="3" fill="#5f9a45" /><path d="M10 10.300v3.400M8.300 12h3.400" stroke="#fff" /></g>}
    </Svg>
  );
}
function StructIcon() {
  return (
    <Svg>
      <path d="M0 1.500h5.500V15M0 14.500h5M10.500 1v13.500M10.500 1.500H16M11 14.500h5" stroke="#7d9fd4" />
      <path d="M.5 4h4M.5 7h4M.5 10h3M12 5h4M12 8h4M12 11h4" stroke="#9cc49b" />
      <path d="M3 13c3 0 3.500-2 5-4.500s2-3.500 5-4" stroke="#3e9142" strokeWidth="2.200" />
    </Svg>
  );
}
function TableIcon({ add }) {
  return (
    <Svg>
      <rect x="1" y="1.500" width="13" height="13" fill="#f2f8fd" stroke="#7fa9d6" />
      <path d="M1 4h13" stroke="#7fa9d6" strokeWidth="2" />
      <path d="M1 7.500h13M1 10h13M1 12.500h13M5 4v10" stroke="#a9c5e4" />
      {add && <g><circle cx="12.500" cy="12.500" r="3.200" fill="#5f9a45" /><path d="M12.500 10.700v3.600M10.700 12.500h3.600" stroke="#fff" /></g>}
    </Svg>
  );
}
function Expander({ open, line }) {
  return (
    <span className={"relative flex w-3.5 shrink-0 items-center self-stretch before:absolute before:left-[6px] before:w-px before:bg-[#666] " + line}>
      <button type="button" aria-label={open ? "Collapse" : "Expand"} className="relative flex size-3.5 items-center justify-center rounded-[3px] border border-[#b0b0b0] bg-[#d3d3d3]">
        <Svg s={8} vb="0 0 8 8"><path d={open ? "M0 4h8" : "M0 4h8M4 0v8"} stroke="#666" strokeWidth="2" /></Svg>
      </button>
    </span>
  );
}
const FULL = "before:inset-y-0";
const TOP = "before:top-0 before:h-1/2";

function DbRow({ name, open, last }) {
  return (
    <li className="flex flex-1 items-center pl-[9px]">
      <Expander open={open} line={last ? TOP : FULL} />
      <span className="h-px w-[7px] bg-[#666]" />
      <DbIcon />
      <a href={"#" + name} className="ml-[5px]">{name}</a>
    </li>
  );
}

function Sidebar() {
  return (
    <aside className="flex w-[201px] shrink-0 flex-col border-r-[3px] border-[#aaa] bg-[linear-gradient(90deg,#f3f3f3_82%,#d8dbdd)] text-[13px] text-black">
      <h1 className="mt-[3px] pl-[18px] font-['Noto_Sans','Open_Sans',sans-serif] text-[27px] leading-8 font-semibold text-[#f89c0e] italic">
        <span className="text-[#6c78af]">php</span>MyAdmin
      </h1>
      <div className="mt-1.5 flex gap-1 pl-[42px]">
        <Svg><path d="M1 8l7-7 7 7h-2v7H3V8z" fill="#d9b98c" stroke="#8f6a3d" /><path d="M6.500 9h3v6h-3z" fill="#7b4c24" /></Svg>
        <Svg><path d="M6 1h9v14H6z" fill="#b98b4e" stroke="#8b6530" /><path d="M10 1l5 0v14l-5-2z" fill="#8b6530" /><path d="M0 8l4-4v2.500h4v3H4V12z" fill="#3a9a4c" /></Svg>
        <Svg><circle cx="8" cy="8" r="7" fill="#4a7fc4" stroke="#c4d4e8" strokeWidth="1.500" /><path d="M6 6c0-3 4.500-2.500 4 0-.3 1.500-2 1.500-2 3M8 10.800v1.500" stroke="#fff" strokeWidth="1.600" /></Svg>
        <Svg><path d="M5.500.5h7l3 3v12h-10z" fill="#fff" stroke="#aaa" /><rect x="1" y="4" width="7" height="9" rx="1" fill="#eee" stroke="#999" /><path d="M3 6h3v5H3z" fill="#bbb" /></Svg>
        <Svg><circle cx="8" cy="8" r="6" stroke="#a4a4a4" strokeWidth="3" strokeDasharray="2.500 2.200" /><circle cx="8" cy="8" r="4" stroke="#a4a4a4" strokeWidth="3" /></Svg>
        <Svg><path d="M12.500 4C8 0 2.500 3 2.500 8s5 7 9.500 4.500" stroke="#4f9f57" strokeWidth="2.600" /><path d="M7 8.500h8L11 13z" fill="#4f9f57" /></Svg>
      </div>
      <div className="mt-[7px] flex gap-1 pl-2.5">
        <button type="button" className="h-[25px] rounded border border-[#ddd] px-1 whitespace-nowrap">Recent</button>
        <button type="button" className="h-[25px] rounded border border-[#ddd] px-1 whitespace-nowrap">Favorites</button>
      </div>
      <div className="mt-2 flex justify-end pr-6">
        <Svg w={14} h={8} vb="0 0 14 8"><rect x=".8" y=".8" width="7" height="6" rx="3" stroke="#666" strokeWidth="1.500" /><rect x="6.200" y=".8" width="7" height="6" rx="3" stroke="#666" strokeWidth="1.500" /><path d="M4 4h6" stroke="#666" strokeWidth="1.500" /></Svg>
      </div>
      <ul className="mt-2 flex h-[770px] flex-col whitespace-nowrap">
        <li className="flex flex-1 items-center pl-[15px]">
          <span className="h-1/2 w-[15px] self-end border-t border-l border-[#666]" />
          <DbIcon add />
          <a href="#new" className="ml-[5px]">New</a>
        </li>
        <DbRow name="baza25" />
        <DbRow name="cetvrtok" />
        <DbRow name="challenge07" open last />
        <li className="flex flex-1 items-center pl-[15px]">
          <span className="w-px self-stretch bg-[#666]" />
          <span className="ml-[19px] w-px self-stretch bg-[#666]" />
          <span className="h-px w-3 bg-[#666]" />
          <TableIcon add />
          <a href="#new-table" className="ml-[5px]">New</a>
        </li>
        {TABLES.map((t, i) => (
          <li key={t} className="flex flex-1 items-center pl-[15px]">
            <span className="w-px self-stretch bg-[#666]" />
            <span className={"mr-2 ml-2.5 flex flex-1 items-center self-stretch pl-[3px] " + (t === "city" ? "bg-linear-to-r from-[#dedede] from-80% to-[#dedede]/20" : "")}>
              <Expander line={i === TABLES.length - 1 ? TOP : FULL} />
              <span className="h-px w-[5px] bg-[#666]" />
              <StructIcon />
              <a href={"#" + t} className="ml-[5px]">{t}</a>
            </span>
          </li>
        ))}
        {DBS.map((d, i) => (
          <DbRow key={d} name={d} last={i === DBS.length - 1} />
        ))}
      </ul>
    </aside>
  );
}

function InsertIcon() {
  return (
    <Svg>
      <path d="M1 1.500h5v4H1zM1 10.500h5v4H1z" fill="#d5d5dc" />
      <path d="M0 .5h6.500M5.500 0v3M0 15.500h6.500M5.500 13v3M0 5.500h3M0 10.500h3" stroke="#333" />
      <path d="M3 8l4-4v3h4v2H7v3z" fill="#5b58c4" />
      <path d="M12 6.500h3v4h-3z" fill="#f2c33a" stroke="#333" strokeWidth=".8" />
      <path d="M13.500 1v3M12 2.500h3" stroke="#5b58c4" />
    </Svg>
  );
}

const MENU = [
  ["Structure", <StructIcon />],
  ["SQL", <Svg><path d="M4 1h10l-2 12H2z" fill="#e9f3fc" stroke="#6d9bd0" /><path d="M1 13c1-2 3-2 3 0s7 2 9 0" stroke="#6d9bd0" strokeWidth="1.500" fill="#cfe2f5" /></Svg>],
  ["Search", <Svg><circle cx="6" cy="6" r="4.500" fill="#d6e8f8" stroke="#8fb3da" strokeWidth="1.500" /><path d="M9.500 9.500 14 15" stroke="#d98d3d" strokeWidth="3" /></Svg>],
  ["Insert", <InsertIcon />],
  ["Export", <Svg><rect x="1.500" y="1" width="11" height="14" fill="#f2f8fd" stroke="#7fa9d6" /><path d="M2 4h10M2 7h10M5 1v13" stroke="#7fa9d6" /><path d="M1 11h12M11 8l4 3-4 3z" stroke="#3a8a45" strokeWidth="2" fill="#3a8a45" /></Svg>],
  ["Import", <Svg><rect x="1.500" y="1" width="12" height="14" fill="#f2f8fd" stroke="#7fa9d6" /><path d="M2 4h11M2 7h11M6 1v13" stroke="#7fa9d6" /><path d="M4 11h12M6 8l-3 3 3 3z" stroke="#d8433f" strokeWidth="2" fill="#d8433f" /></Svg>],
  ["Privileges", <Svg><rect x=".5" y="2.500" width="15" height="11" fill="#f6f6f6" stroke="#bbb" /><rect x="2" y="5" width="5.500" height="6.500" fill="#7b98bf" /><path d="M9 6h5M9 8.500h5M9 11h3" stroke="#8aa2c0" /><circle cx="4.700" cy="7" r="1.500" fill="#f3cfae" /></Svg>],
  ["Operations", <Svg><path d="M2 14 9 7" stroke="#7da5e4" strokeWidth="4" strokeLinecap="round" /><path d="M8 8c-1-4 1-7 5-6l-2 3 1 1 3-2c1 4-3 6-6 5z" fill="#ccc" stroke="#888" strokeWidth=".8" /></Svg>],
  ["Tracking", <Svg><path d="M0 8c3-6 13-6 16 0-3 6-13 6-16 0z" fill="#fbeee0" stroke="#d9a676" /><circle cx="8" cy="7.500" r="4" fill="#4a78c0" /><circle cx="8" cy="7.500" r="1.700" fill="#1c2f52" /></Svg>],
  ["Triggers", <Svg><path d="M1 4h3l6 8h4M1 12h3l6-8h4M11.500 1.500 14 4l-2.500 2.500M11.500 9.500 14 12l-2.500 2.500" stroke="#999" strokeWidth="1.600" /></Svg>],
];

const CITIES = [
  "Tokyo", "New York", "Mexico City", "Mumbai", "São Paulo", "Delhi", "Shanghai", "Kolkata", "Los Angeles", "Dhaka", "Buenos Aires", "Karachi",
  "Cairo", "Rio de Janeiro", "Ōsaka", "Beijing", "Manila", "Moscow", "Istanbul", "Paris", "Seoul", "Lagos", "Jakarta", "Guangzhou",
];

const BOX = "size-[13px] shrink-0 appearance-none rounded-[2px] border border-[#767676] bg-white";

function Select({ id, value, width }) {
  return (
    <span className={"relative flex h-6 items-center " + width}>
      <select id={id} aria-label={id} className="size-full appearance-none rounded-[2px] border border-[#b0b0b0] bg-white pl-2 text-[#444]">
        <option>{value}</option>
      </select>
      <Svg w={10} h={6} vb="0 0 10 6" className="pointer-events-none absolute right-[5px]"><path d="M1 .8l4 4 4-4" stroke="#333" strokeWidth="2" /></Svg>
    </span>
  );
}

function MenuTab({ icon, label, active }) {
  return (
    <a
      href={"#" + label}
      className={
        "flex items-center gap-[11px] pl-3 font-bold text-[#235a81] " +
        (active ? "bg-white pr-2" : "border-r border-b border-[#c4c4c4] bg-linear-to-b from-white to-[#dcdcdc] pr-2 shadow-[inset_1px_0_#fff]")
      }
    >
      {icon}
      {label}
    </a>
  );
}

function Main() {
  return (
    <main className="flex min-w-0 flex-1 flex-col overflow-hidden bg-white text-[13px] text-[#444]">
      <div className="flex h-6 shrink-0 items-center bg-[#888] text-white">
        <button type="button" aria-label="Hide panel" className="flex h-[21px] w-4 items-center justify-center bg-[#e9e9e9]"><Svg w={12} h={8} vb="0 0 12 8"><path d="M12 4H1M4 1 1 4l3 3" stroke="#444" /></Svg></button>
        <nav aria-label="Breadcrumb" className="ml-[15px] flex items-center gap-[3px] pt-1 whitespace-nowrap [text-shadow:0_1px_0_#333]">
          <Svg><path d="M9 1h6v13H9z" fill="#ddd" stroke="#999" /><rect x="1" y="3" width="10" height="8" fill="#4b78bd" stroke="#ddd" /><path d="M4 13h4" stroke="#ddd" strokeWidth="2" /></Svg>
          <a href="#server">Server: 127.0.0.1</a>
          <span>»</span>
          <DbIcon />
          <a href="#database">Database: challenge07</a>
          <span>»</span>
          <TableIcon />
          <a href="#table">Table: city</a>
        </nav>
        <div className="ml-auto flex items-center gap-4 pt-1 pr-1.5">
          <Svg><circle cx="8" cy="8" r="6.500" stroke="#ddd" strokeWidth="3" strokeDasharray="2.600 2.500" /><circle cx="8" cy="8" r="4.200" stroke="#ddd" strokeWidth="2.600" /></Svg>
          <Svg w={12} h={10} vb="0 0 12 10"><path d="M0 1h12M1 9l5-5 5 5" stroke="#ccc" strokeWidth="2" /></Svg>
        </div>
      </div>
      <nav aria-label="Table pages" className="flex h-[37px] shrink-0 bg-linear-to-b from-white to-[#dcdcdc]">
        <MenuTab label="Browse" active icon={<TableIcon />} />
        {MENU.map(([l, icon]) => <MenuTab key={l} label={l} icon={icon} />)}
      </nav>
      <div className="mt-[13px] mr-[7px] ml-1 shrink-0">
        <p className="flex h-[35px] items-center gap-1 rounded-t-[5px] border border-b-0 border-[#a2d246] bg-[#ebf8a4] pt-1 pl-[13px] text-black">
          <Svg><path d="M1.500 9l4 5L14.500 2.500" stroke="#4fae4a" strokeWidth="3.200" /></Svg>
          Showing rows 0 - 24 (15493 total, Query took 0.0022 seconds.)
        </p>
        <pre className="h-9 bg-[#e5e5e5] pt-[11px] pl-2.5 font-['Liberation_Mono',monospace] text-[10px] leading-[14px] text-[#1e3f8a]"><a href="#select" className="border-b border-dotted border-black text-[#708]">SELECT</a> <span className="text-[#f0f]">*</span> <span className="text-[#708]">FROM</span> `city`</pre>
        <div className="flex h-[34px] items-center justify-end gap-1 rounded-b-[5px] bg-[#d3dce3] pr-0.5 pb-1 whitespace-nowrap text-black">
          <input id="profiling" type="checkbox" className={BOX} />
          <label htmlFor="profiling" className="ml-1">Profiling</label>
          <span>[<a href="#inline" className="text-[#4b7dab]">Edit inline</a>]</span>
          <span>[ <a href="#edit" className="text-[#4b7dab]">Edit</a> ]</span>
          <span>[ <a href="#explain" className="text-[#4b7dab]">Explain SQL</a> ]</span>
          <span>[ <a href="#php" className="text-[#4b7dab]">Create PHP code</a> ]</span>
          <span>[ <a href="#refresh" className="text-[#4b7dab]">Refresh</a>]</span>
        </div>
      </div>
      <form className="mt-4 flex h-7 shrink-0 items-center pl-[38px] whitespace-nowrap">
        <Select id="Page" value="1" width="w-[52px]" />
        <button type="button" className="ml-3 h-7 w-6">&gt;</button>
        <button type="button" className="h-7 w-8">&gt;&gt;</button>
        <span className="mr-3 ml-3 h-[18px] w-px bg-[#998]" />
        <label htmlFor="rows">Number of rows:</label>
        <span className="ml-3.5"><Select id="rows" value="25" width="w-[52px]" /></span>
        <label htmlFor="filter" className="ml-[35px]">Filter rows:</label>
        <input id="filter" type="text" placeholder="Search this table" className="ml-2.5 h-7 w-[178px] rounded-[2px] border border-[#aaa] bg-white px-[5px] placeholder:text-[#757575]" />
        <label htmlFor="key" className="ml-[7px]">Sort by key:</label>
        <span className="ml-3.5"><Select id="key" value="None" width="w-[139px]" /></span>
      </form>
      <a href="#options" className="mt-[17px] ml-1 h-[21px] shrink-0 leading-5 text-[#235a81]">+ Options</a>
      <table className="ml-1 w-[334px] shrink-0 table-fixed border-collapse">
        <colgroup><col className="w-[210px]" /><col className="w-8" /><col /></colgroup>
        <thead>
          <tr className="h-[21px] bg-linear-to-b from-white to-[#ccc] text-left text-[#235a81]">
            <th className="border-r border-white p-0">
              <span className="flex items-center justify-between pr-2.5 pl-[5px]">
                <Svg w={46} h={16} vb="0 0 46 16"><path d="M15 8.500H1M4.500 5 1 8.500 4.500 12M15 1h15M23 1v15M32 8.500h13M41.500 5 45 8.500 41.500 12" stroke="#6c78c0" strokeWidth="1.400" /></Svg>
                <Svg w={12} h={7} vb="0 0 12 7"><path d="M.5.5h11L6 6.500z" fill="#777" stroke="#000" /></Svg>
              </span>
            </th>
            <th className="border-r border-white p-0 pl-1.5">id</th>
            <th className="p-0 pl-[3px]">name</th>
          </tr>
        </thead>
        <tbody>
          {CITIES.map((c, i) => (
            <tr key={c} className="h-[27px] odd:bg-white even:bg-[#dfdfdf]">
              <td className="p-0 pl-2.5">
                <span className="flex items-center text-[#235a81]">
                  <input type="checkbox" aria-label={"Select row " + (i + 1)} className={BOX} />
                  <a href="#edit-row" className="ml-3.5 flex w-[51px] items-center gap-1">
                    <Svg><path d="M1 15l1.500-5L11 1.500 14.500 4 6 13z" fill="#f4c95c" stroke="#b5842a" /><path d="M1 15l1.500-4 3 2z" fill="#e9c9a0" /><path d="M4.500 12 12 4" stroke="#fde9ae" strokeWidth="1.300" /></Svg>
                    Edit
                  </a>
                  <a href="#copy-row" className="flex w-[59px] items-center gap-1"><InsertIcon />Copy</a>
                  <a href="#delete-row" className="flex items-center gap-1">
                    <Svg s={15}><circle cx="8" cy="8" r="7.300" fill="#e2574c" stroke="#c9473e" /><circle cx="8" cy="8" r="5.800" stroke="#f3a39c" /><path d="M4.500 8h7" stroke="#fff" strokeWidth="2.400" /></Svg>
                    Delete
                  </a>
                </span>
              </td>
              <td className="p-0 pr-3.5 text-right">{i + 1}</td>
              <td className="p-0 pl-[3px] whitespace-nowrap">{c}</td>
            </tr>
          ))}
        </tbody>
      </table>
    </main>
  );
}

function Browser() {
  return (
    <div className={"flex h-full min-w-0 flex-1 basis-0 flex-col " + ARIAL}>
      <BrowserChrome />
      <div className="relative flex min-h-0 flex-1">
        <Sidebar />
        <Main />
        <div className="flex w-[17px] shrink-0 flex-col items-center bg-[#f1f1f1] pt-[7px]">
          <Caret className="rotate-180 text-[#888]" />
          <span className="mt-1.5 h-[620px] w-[13px] bg-[#c1c1c1]" />
        </div>
        <button type="button" className="absolute bottom-0 left-[201px] flex h-[21px] w-[79px] items-center gap-1.5 border border-b-0 border-[#aaa] bg-[#ccc] pl-2 text-[13px] text-[#555]">
          <Svg s={13} vb="0 0 13 13"><rect x=".5" y=".5" width="12" height="12" fill="#fff" stroke="#999" /><path d="M2 3h9v8H2z" fill="#222" /></Svg>
          Console
        </button>
      </div>
      <nav aria-label="Second taskbar" className={"flex h-10 bg-[#1d1e20] text-xs text-white " + UI}>
        {[<WinLogo key="w" s={16} />, <SearchGlyph key="s" s={16} />, <TaskView key="t" s={16} />].map((icon, i) => (
          <button key={i} type="button" aria-label={["Start", "Search", "Task view"][i]} className="flex w-12 items-center justify-center">{icon}</button>
        ))}
        <div className="ml-[3px] flex">
          {APPS.map(([id, name, state]) => (
            <button key={id} type="button" aria-label={name} className={"flex w-[49px] flex-col items-center justify-between " + (state === "active" ? "bg-[#4b4c4e]" : "")}>
              <span className="flex h-[38px] items-center pt-0.5">{APP[id](24)}</span>
              <span className={"h-0.5 " + (state === "active" ? "w-full bg-[#9ccbf5]" : state ? "w-10 bg-[#9ccbf5]" : "w-0")} />
            </button>
          ))}
        </div>
        <time className="mr-1 ml-auto flex flex-col justify-center text-center leading-[19px]"><span>18:00</span><span>22.09.2020</span></time>
      </nav>
    </div>
  );
}

export default function App() {
  return (
    <div className="flex h-screen w-full overflow-hidden">
      <PaintWindow />
      <Browser />
    </div>
  );
}
